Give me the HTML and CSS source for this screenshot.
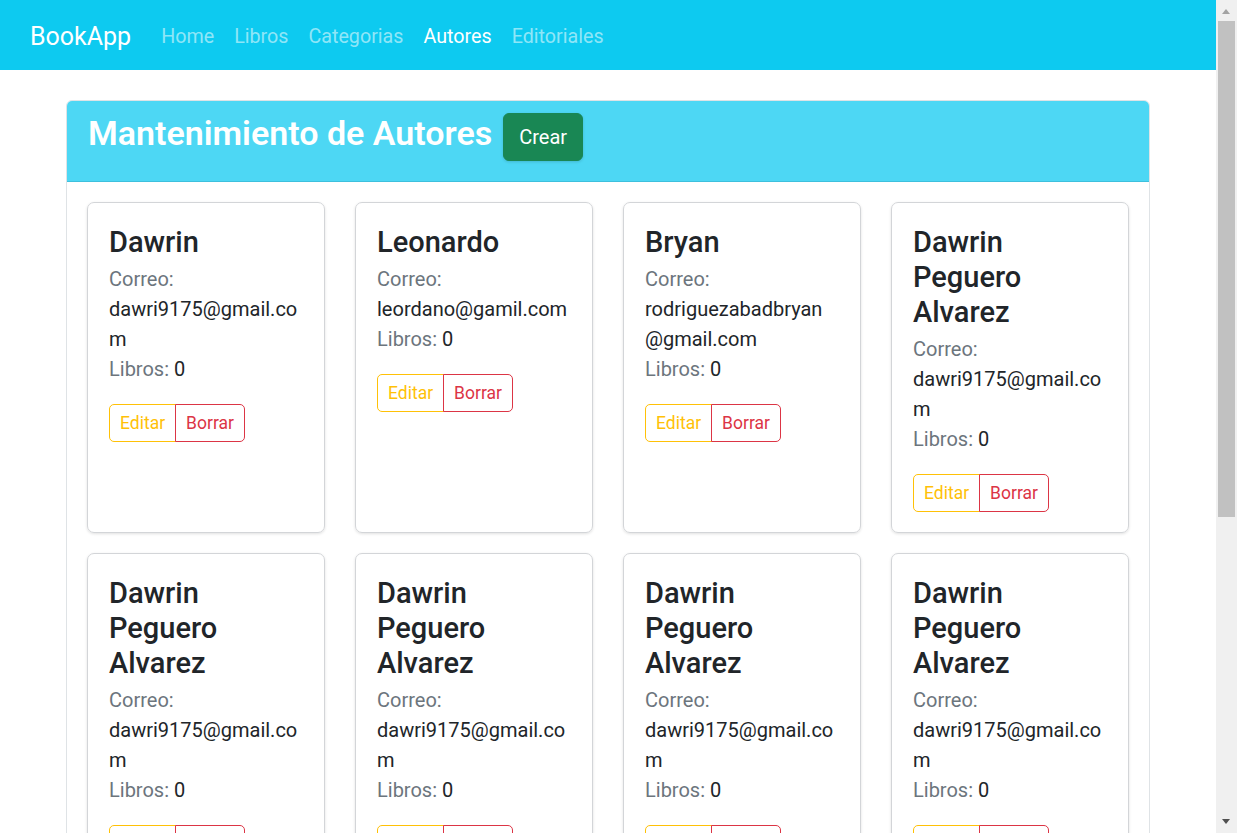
FILE: index.html
```html
<!DOCTYPE html>
<html lang="es">
<head>
<meta charset="utf-8">
<title>BookApp - Autores</title>
<link rel="stylesheet" href="styles.css">
</head>
<body>
<div class="page">
<nav class="navbar">
  <a class="brand" href="#">BookApp</a>
  <ul class="nav">
    <li><a class="nav-link" href="#">Home</a></li>
    <li><a class="nav-link" href="#">Libros</a></li>
    <li><a class="nav-link" href="#">Categorias</a></li>
    <li><a class="nav-link active" href="#">Autores</a></li>
    <li><a class="nav-link" href="#">Editoriales</a></li>
  </ul>
</nav>
<main class="main">
  <section class="panel">
    <header class="panel-header">
      <h1 class="panel-title">Mantenimiento de Autores</h1>
      <button class="btn-crear">Crear</button>
    </header>
    <div class="panel-body">
      <div class="grid">
        <article class="author">
          <h2 class="author-name">Dawrin</h2>
          <p class="line muted">Correo:</p>
          <p class="line email">dawri9175@gmail.co<wbr>m</p>
          <p class="line"><span class="muted">Libros:</span> 0</p>
          <div class="btn-group"><button class="btn edit">Editar</button><button class="btn del">Borrar</button></div>
        </article>
        <article class="author">
          <h2 class="author-name">Leonardo</h2>
          <p class="line muted">Correo:</p>
          <p class="line email">leordano@gamil.com</p>
          <p class="line"><span class="muted">Libros:</span> 0</p>
          <div class="btn-group"><button class="btn edit">Editar</button><button class="btn del">Borrar</button></div>
        </article>
        <article class="author">
          <h2 class="author-name">Bryan</h2>
          <p class="line muted">Correo:</p>
          <p class="line email">rodriguezabadbryan<wbr>@gmail.com</p>
          <p class="line"><span class="muted">Libros:</span> 0</p>
          <div class="btn-group"><button class="btn edit">Editar</button><button class="btn del">Borrar</button></div>
        </article>
        <article class="author">
          <h2 class="author-name">Dawrin Peguero Alvarez</h2>
          <p class="line muted">Correo:</p>
          <p class="line email">dawri9175@gmail.co<wbr>m</p>
          <p class="line"><span class="muted">Libros:</span> 0</p>
          <div class="btn-group"><button class="btn edit">Editar</button><button class="btn del">Borrar</button></div>
        </article>
        <article class="author">
          <h2 class="author-name">Dawrin Peguero Alvarez</h2>
          <p class="line muted">Correo:</p>
          <p class="line email">dawri9175@gmail.co<wbr>m</p>
          <p class="line"><span class="muted">Libros:</span> 0</p>
          <div class="btn-group"><button class="btn edit">Editar</button><button class="btn del">Borrar</button></div>
        </article>
        <article class="author">
          <h2 class="author-name">Dawrin Peguero Alvarez</h2>
          <p class="line muted">Correo:</p>
          <p class="line email">dawri9175@gmail.co<wbr>m</p>
          <p class="line"><span class="muted">Libros:</span> 0</p>
          <div class="btn-group"><button class="btn edit">Editar</button><button class="btn del">Borrar</button></div>
        </article>
        <article class="author">
          <h2 class="author-name">Dawrin Peguero Alvarez</h2>
          <p class="line muted">Correo:</p>
          <p class="line email">dawri9175@gmail.co<wbr>m</p>
          <p class="line"><span class="muted">Libros:</span> 0</p>
          <div class="btn-group"><button class="btn edit">Editar</button><button class="btn del">Borrar</button></div>
        </article>
        <article class="author">
          <h2 class="author-name">Dawrin Peguero Alvarez</h2>
          <p class="line muted">Correo:</p>
          <p class="line email">dawri9175@gmail.co<wbr>m</p>
          <p class="line"><span class="muted">Libros:</span> 0</p>
          <div class="btn-group"><button class="btn edit">Editar</button><button class="btn del">Borrar</button></div>
        </article>
      </div>
    </div>
  </section>
</main>
</div>
<div class="scrollbar" aria-hidden="true">
  <span class="arrow-up"></span>
  <span class="thumb"></span>
  <span class="arrow-down"></span>
</div>
</body>
</html>
```
FILE: styles.css
```css
* { box-sizing: border-box; }
html, body { margin: 0; padding: 0; }
html { overflow: hidden; }
body {
  font-family: Roboto, "Noto Sans", sans-serif;
  font-size: 20px;
  line-height: 1.5;
  color: #212529;
  background: #fff;
  height: 833px;
  overflow: hidden;
}
.page {
  width: 1216px;
}
.navbar {
  display: flex;
  align-items: center;
  height: 70px;
  padding: 4px 31px 0 30px;
  background: #0dcaf0;
}
.brand {
  font-size: 25px;
  color: #fff;
  text-decoration: none;
  margin-right: 20px;
  line-height: 1.5;
}
.nav {
  display: flex;
  list-style: none;
  margin: 0;
  padding: 0;
}
.nav-link {
  display: block;
  padding: 10px;
  color: rgba(255, 255, 255, 0.55);
  text-decoration: none;
  font-size: 19.7px;
}
.nav-link.active { color: #fff; }
.main {
  padding: 30px 0 0 66px;
}
.panel {
  width: 1084px;
  border: 1px solid #dfe3e6;
  border-radius: 6px;
  overflow: hidden;
  background: #fff;
}
.panel-header {
  display: flex;
  align-items: center;
  gap: 11px;
  height: 81px;
  padding: 0 21px 8px;
  background: #4dd7f4;
  border-bottom: 1px solid #3ec0dd;
}
.panel-title {
  margin: 0 0 8px;
  font-size: 34px;
  font-weight: 600;
  color: #fff;
  line-height: 1.2;
}
.btn-crear {
  font-family: inherit;
  font-size: 20px;
  line-height: 1.5;
  color: #fff;
  background: #198754;
  border: 1px solid #198754;
  border-radius: 6px;
  padding: 8px 15px;
  height: 48px;
  box-shadow: 0 1px 3px rgba(0,0,0,0.15);
}
.panel-body {
  padding: 20px;
}
.grid {
  display: grid;
  grid-template-columns: repeat(4, 238px);
  column-gap: 30px;
  row-gap: 20px;
}
.author {
  border: 1px solid #d3d5d8;
  border-radius: 7px;
  padding: 22px 20px 20px 21px;
  box-shadow: 0 1px 3px rgba(0, 0, 0, 0.12);
  min-height: 331px;
}
.author-name {
  margin: 0 0 4px;
  font-size: 29px;
  font-weight: 500;
  line-height: 35px;
  color: #212529;
}
.line {
  margin: 0;
  line-height: 30px;
}
.muted { color: #6c757d; }
.email { overflow-wrap: anywhere; }
.btn-group {
  display: inline-flex;
  margin-top: 20px;
}
.btn {
  font-family: inherit;
  font-size: 17.5px;
  line-height: 26px;
  padding: 5px 10px;
  background: transparent;
  border: 1px solid;
  cursor: pointer;
}
.btn.edit {
  color: #ffc107;
  border-color: #ffc107;
  border-radius: 5px 0 0 5px;
}
.btn.del {
  color: #dc3545;
  border-color: #dc3545;
  border-radius: 0 5px 5px 0;
  margin-left: -1px;
}
.scrollbar {
  position: fixed;
  top: 0;
  right: 0;
  width: 21px;
  height: 833px;
  background: #f0f0f0;
}
.thumb {
  position: absolute;
  left: 2px;
  top: 21px;
  width: 17px;
  height: 496px;
  background: #c1c1c1;
}
.arrow-up {
  position: absolute;
  left: 6px;
  top: 9px;
  width: 0;
  height: 0;
  border-left: 4.5px solid transparent;
  border-right: 4.5px solid transparent;
  border-bottom: 5px solid #a3a3a3;
}
.arrow-down {
  position: absolute;
  left: 6px;
  bottom: 9px;
  width: 0;
  height: 0;
  border-left: 4.5px solid transparent;
  border-right: 4.5px solid transparent;
  border-top: 5px solid #505050;
}
```
